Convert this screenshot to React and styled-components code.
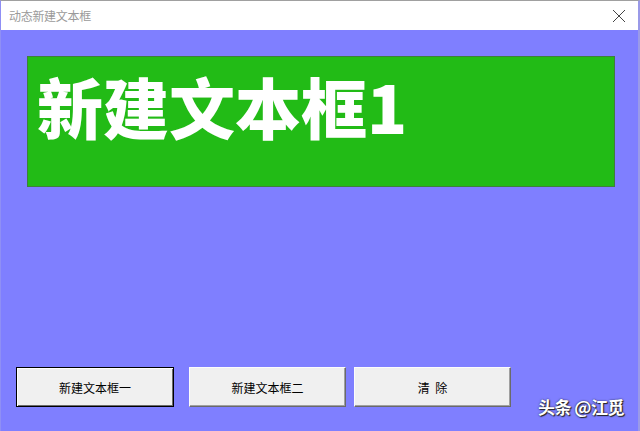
import React from "react";
import styled, { createGlobalStyle } from "styled-components";

const Global = createGlobalStyle`
  html, body { margin: 0; padding: 0; background: #7f7fff; }
  body { font-family: "Noto Sans CJK SC", "Noto Sans", sans-serif; }
`;

const Window = styled.div`
  position: relative;
  width: 640px;
  height: 431px;
  box-sizing: border-box;
  display: flex;
  flex-direction: column;
  background: #7f7fff;
  border-top: 1px solid #a0a0a0;
  border-right: 2px solid #9a9ae8;
  border-left: 1px solid #8f8ff5;
  overflow: hidden;
`;

const TitleBar = styled.div`
  height: 29px;
  flex: 0 0 29px;
  background: #ffffff;
  display: flex;
  align-items: center;
  justify-content: space-between;
  padding: 0 12px 0 8px;
`;

const Title = styled.span`
  font-family: "Noto Sans CJK SC", sans-serif;
  font-size: 12px;
  color: #9a9a9a;
  letter-spacing: -0.3px;
`;

const Close = styled.svg`
  width: 14px;
  height: 14px;
  margin-top: 1px;
`;

const Body = styled.div`
  flex: 1;
  display: flex;
  flex-direction: column;
  padding: 26px 0 0 26px;
`;

const TextBox = styled.div`
  width: 588px;
  height: 131px;
  box-sizing: border-box;
  background: #22bb16;
  border: 1px solid #3f7f3a;
  display: flex;
  align-items: flex-start;
  padding: 6px 0 0 9px;
`;

const BigText = styled.span`
  font-family: "Noto Sans CJK SC", sans-serif;
  font-weight: 900;
  font-size: 66px;
  line-height: 84px;
  color: #ffffff;
  letter-spacing: 0px;
`;

const ButtonRow = styled.div`
  display: flex;
  align-items: flex-start;
  margin-top: 180px;
  margin-left: -11px;
`;

const Button = styled.button`
  width: ${(p) => p.$w}px;
  height: 40px;
  margin-right: ${(p) => p.$gap}px;
  background: #f0f0f0;
  font-family: "Noto Sans CJK SC", sans-serif;
  font-size: 12px;
  color: #000;
  padding: 0;
  box-sizing: border-box;
  border: 1px solid;
  border-color: ${(p) => (p.$default ? "#000" : "#fcfcfc #6a6a6a #6a6a6a #fcfcfc")};
  box-shadow: ${(p) =>
    p.$default
      ? "inset 1px 1px 0 #fff, inset -1px -1px 0 #6a6a6a"
      : "inset -1px -1px 0 #a0a0a0"};
  white-space: pre;
`;

const Watermark = styled.div`
  position: absolute;
  right: 14px;
  bottom: 12px;
  font-family: "Noto Sans CJK SC", sans-serif;
  font-weight: 700;
  font-size: 17px;
  color: #ffffff;
  text-shadow: 1px 1px 1px #222, 0 0 2px rgba(0,0,0,0.7);
  letter-spacing: -0.5px;
`;

export default function App() {
  return (
    <>
      <Global />
      <Window>
        <TitleBar>
          <Title>动态新建文本框</Title>
          <Close viewBox="0 0 14 14">
            <path d="M1 1 L13 13 M13 1 L1 13" stroke="#444" strokeWidth="1" fill="none" />
          </Close>
        </TitleBar>
        <Body>
          <TextBox>
            <BigText>新建文本框1</BigText>
          </TextBox>
          <ButtonRow>
            <Button $w={158} $gap={15} $default>新建文本框一</Button>
            <Button $w={157} $gap={8}>新建文本框二</Button>
            <Button $w={157} $gap={0}>清  除</Button>
          </ButtonRow>
        </Body>
        <Watermark>头条 @江觅</Watermark>
      </Window>
    </>
  );
}
